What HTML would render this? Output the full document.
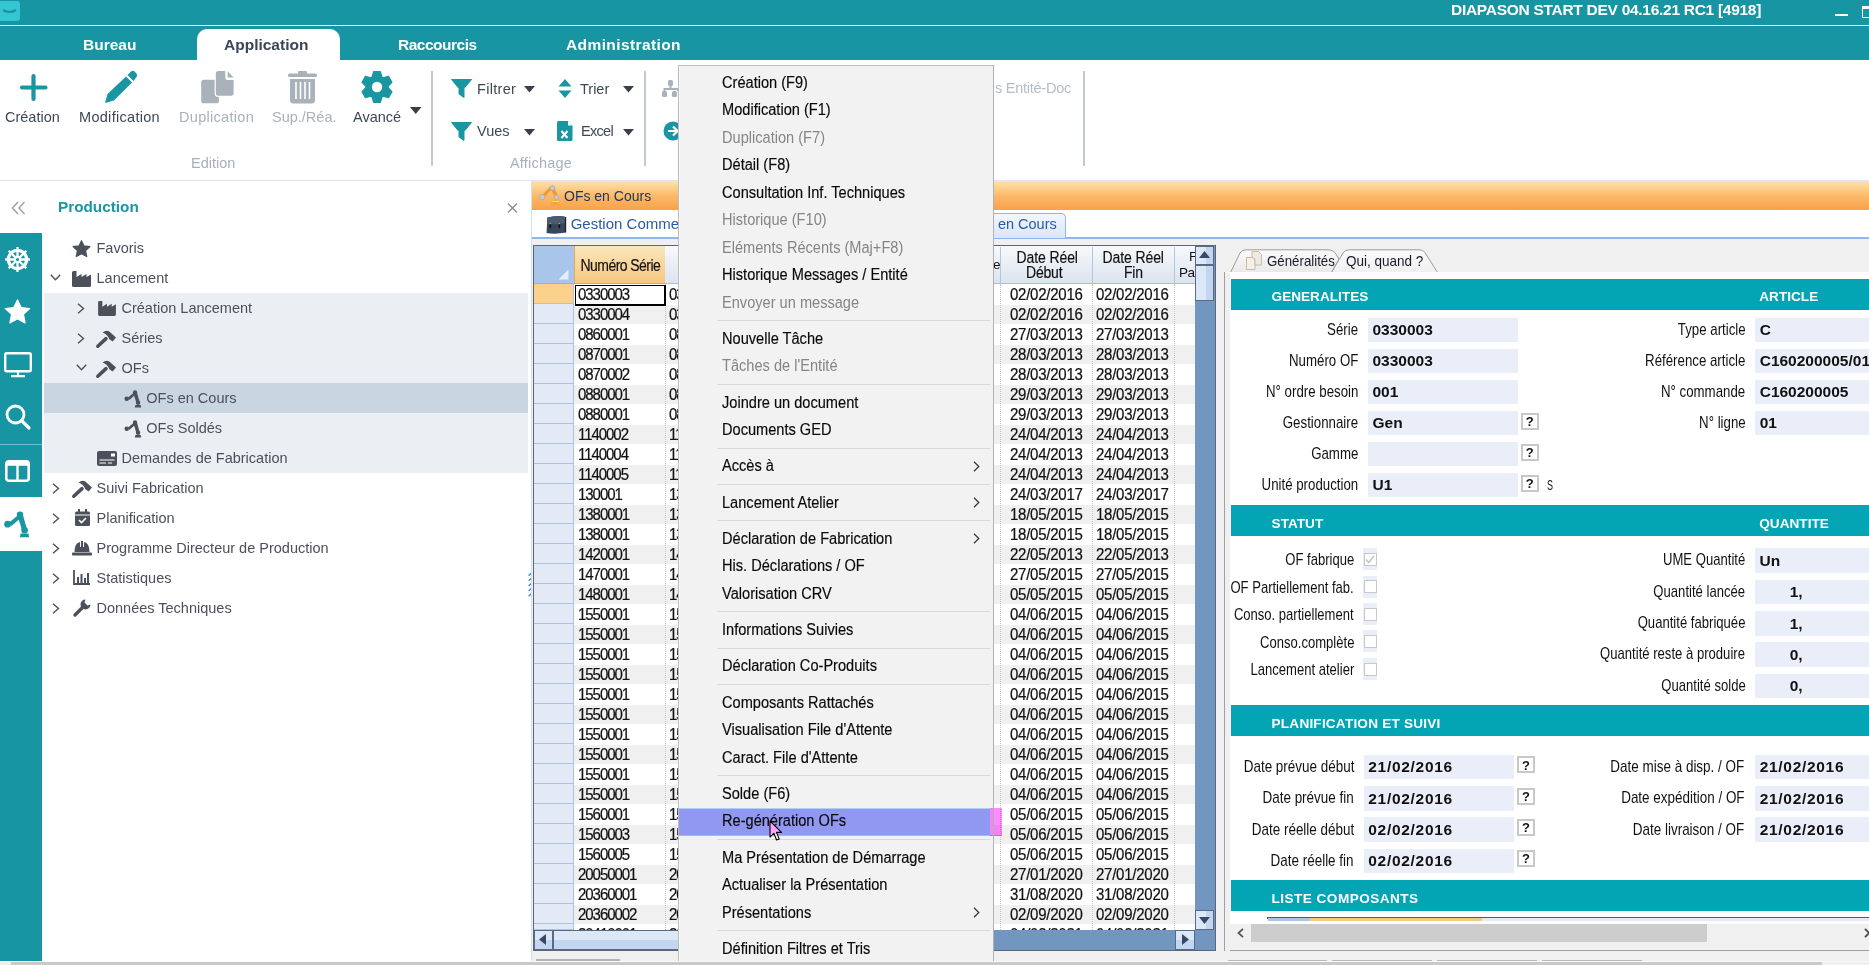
<!DOCTYPE html>
<html><head><meta charset="utf-8">
<style>
*{box-sizing:border-box}
html,body{margin:0;padding:0}
body{width:1869px;height:965px;position:relative;overflow:hidden;background:#fff;font-family:"Liberation Sans",sans-serif;color:#000}
.a{position:absolute}
.t{position:absolute;white-space:nowrap;line-height:1}
svg{position:absolute;overflow:visible}
/* ribbon */
.rl{font-size:14.5px;color:#3f4756}
.rd{color:#a9b1ba}
.tab{font-size:15.5px;font-weight:bold;color:#fff}
/* tree */
.tr{font-size:14.5px;color:#4b505b}
/* menu */
.mi{position:absolute;left:722px;font-size:14.6px;color:#0a0a0a;-webkit-text-stroke:0.15px #0a0a0a;transform:scaleY(1.08);transform-origin:0 12.36px;white-space:nowrap;line-height:1}
.mi.d{color:#858585;-webkit-text-stroke:0}
.ms{position:absolute;left:717px;width:273px;height:1px;background:#d9d9d9}
.sub{position:absolute;left:973px;width:7px;height:7px;border-right:1.3px solid #333;border-top:1.3px solid #333;transform:rotate(45deg)}
/* grid */
.g{font-size:14px;letter-spacing:-0.45px;color:#111;white-space:nowrap;line-height:1;position:absolute}
.gh{font-size:14px;transform:scaleY(1.12);transform-origin:0 11.85px;-webkit-text-stroke:0.15px #111}
.gd{font-size:15px;transform:scaleY(1.14);transform-origin:0 12.7px;-webkit-text-stroke:0.2px #111}
/* detail */
.lb{position:absolute;font-size:13.6px;color:#111;white-space:nowrap;line-height:1;text-align:right}
.fi{position:absolute;background:#e9eef9;height:25px}
.fv{position:absolute;font-size:14px;font-weight:bold;color:#111;white-space:nowrap;line-height:1}
.q{position:absolute;width:17px;height:17px;border:1px solid #a8a8a8;background:#fff;font-size:12px;font-weight:bold;text-align:center;line-height:15px;color:#111}
.bar{position:absolute;left:1231px;width:638px;height:31px;background:#04a4b3}
.bt{position:absolute;font-size:14px;font-weight:bold;color:#fff;white-space:nowrap;line-height:1}
.cb{position:absolute;left:1363px;width:13px;height:13px;border:1px solid #c9c9c9;background:#fff}
.cbb{position:absolute;left:1362px;width:15px;height:22px;background:#e9eef9}
</style></head>
<body>
<!-- ============ TITLE BAR ============ -->
<div class="a" style="left:0;top:0;width:1869px;height:60px;background:#1895a2"></div>
<div class="a" style="left:0;top:24.5px;width:1869px;height:1.5px;background:#eef7f8"></div>
<div class="a" style="left:0;top:1px;width:20px;height:20px;background:#35c6d4;border-radius:0 3px 3px 0"></div>
<svg style="left:0;top:0" width="20" height="20"><path d="M3 10 Q9.5 14 16 10" stroke="#1895a2" stroke-width="2.2" fill="none"/></svg>
<div class="t" style="left:1451px;top:1.7px;font-size:15.5px;letter-spacing:-0.28px;font-weight:bold;color:#fff">DIAPASON START DEV 04.16.21 RC1 [4918]</div>
<div class="a" style="left:1835px;top:14px;width:13px;height:2px;background:#fff"></div>
<div class="a" style="left:1862px;top:6px;width:12px;height:12px;border:1px solid #fff;border-top-width:3px"></div>

<!-- tabs -->
<div class="a" style="left:197px;top:29px;width:143px;height:32px;background:#fff;border-radius:10px 10px 0 0"></div>
<div class="t tab" style="left:83px;top:37px">Bureau</div>
<div class="t tab" style="left:224px;top:37px;color:#3b4657">Application</div>
<div class="t tab" style="left:398px;top:37px;letter-spacing:-0.5px">Raccourcis</div>
<div class="t tab" style="left:566px;top:37px;letter-spacing:0.4px">Administration</div>

<!-- ============ RIBBON ============ -->
<div class="a" style="left:0;top:180px;width:1869px;height:1px;background:#dfe6ed"></div>
<!-- Création plus -->
<svg style="left:20px;top:74px" width="28" height="27"><path d="M13.5 2V25M2 13.5H25.5" stroke="#1a96a3" stroke-width="4.2" stroke-linecap="round"/></svg>
<div class="t rl" style="left:5px;top:110px">Création</div>
<!-- pencil -->
<svg style="left:104px;top:70px" width="34" height="34" viewBox="0 0 34 34"><path d="M1 33 L3.5 24 L22 6.5 L28 12.5 L10 30.5 Z" fill="#1a96a3"/><path d="M23.5 5 L27 1.5 Q29 0 31 2 L32.5 3.5 Q34 5.5 32.5 7 L29.5 11 Z" fill="#1a96a3"/></svg>
<div class="t rl" style="left:79px;top:110px;letter-spacing:0.3px">Modification</div>
<!-- duplication -->
<svg style="left:200px;top:70px" width="36" height="36" viewBox="0 0 36 36"><rect x="1.2" y="9.7" width="17.7" height="23.6" rx="2.6" fill="#a9b1bb"/><path d="M15.8 3.6 Q15.8 1.1 18.3 1.1 H25.3 V7.5 Q25.3 10 27.8 10 H33.6 V23.3 Q33.6 25.8 31.1 25.8 H18.3 Q15.8 25.8 15.8 23.3 Z" fill="#a9b1bb" stroke="#fff" stroke-width="2.4" paint-order="stroke"/><path d="M27.6 1.3 L33.6 7.4 H27.6 Z" fill="#a9b1bb"/></svg>
<div class="t rl rd" style="left:179px;top:110px;letter-spacing:0.3px">Duplication</div>
<!-- trash -->
<svg style="left:288px;top:71px" width="30" height="33" viewBox="0 0 30 33"><rect x="0" y="2.5" width="29" height="3.5" rx="1.5" fill="#a9b1bb"/><rect x="10" y="0" width="9" height="3" rx="1" fill="#a9b1bb"/><path d="M2 8 H27 V29 Q27 32.5 23.5 32.5 H5.5 Q2 32.5 2 29 Z" fill="#a9b1bb"/><path d="M8 11V28M12.5 11V28M17 11V28M21.5 11V28" stroke="#fff" stroke-width="1.6"/></svg>
<div class="t rl rd" style="left:272px;top:110px">Sup./Réa.</div>
<!-- gear -->
<svg style="left:361px;top:71px" width="32" height="32" viewBox="-16 -16 32 32"><g fill="#1a96a3" stroke="#1a96a3" stroke-width="1.2" stroke-linejoin="round"><circle r="11"/><path id="th" d="M-3.4 -15.3H3.4L5.2 -9H-5.2Z"/><use href="#th" transform="rotate(60)"/><use href="#th" transform="rotate(120)"/><use href="#th" transform="rotate(180)"/><use href="#th" transform="rotate(240)"/><use href="#th" transform="rotate(300)"/></g><circle r="5.2" fill="#fff"/></svg>
<div class="t rl" style="left:353px;top:110px">Avancé</div>
<svg style="left:410px;top:107px" width="12" height="8"><path d="M0 0H11.5L5.75 7Z" fill="#3a3f4a"/></svg>
<div class="a" style="left:431px;top:71px;width:1.5px;height:95px;background:#c4c9ce"></div>
<div class="t rl rd" style="left:191px;top:156px;color:#a8b0bb">Edition</div>

<!-- Affichage group -->
<svg style="left:451px;top:79px" width="21" height="19" viewBox="0 0 21 19"><path d="M0.5 0.5H20.5L13 9.5V18.5L8 15V9.5Z" fill="#1a96a3" stroke="#1a96a3" stroke-linejoin="round"/></svg>
<div class="t rl" style="left:477px;top:82px;letter-spacing:0.3px">Filtrer</div>
<svg style="left:524px;top:86px" width="12" height="7"><path d="M0 0H11L5.5 6.5Z" fill="#3a3f4a"/></svg>
<svg style="left:558px;top:79px" width="14" height="19" viewBox="0 0 14 19"><path d="M7 0L13.5 7.5H0.5Z M7 19L13.5 11.5H0.5Z" fill="#1a96a3"/></svg>
<div class="t rl" style="left:580px;top:82px">Trier</div>
<svg style="left:623px;top:86px" width="12" height="7"><path d="M0 0H11L5.5 6.5Z" fill="#3a3f4a"/></svg>

<svg style="left:451px;top:122px" width="21" height="19" viewBox="0 0 21 19"><path d="M0.5 0.5H20.5L13 9.5V18.5L8 15V9.5Z" fill="#1a96a3" stroke="#1a96a3" stroke-linejoin="round"/></svg>
<div class="t rl" style="left:477px;top:124px">Vues</div>
<svg style="left:524px;top:129px" width="12" height="7"><path d="M0 0H11L5.5 6.5Z" fill="#3a3f4a"/></svg>
<svg style="left:557px;top:121px" width="16" height="20" viewBox="0 0 16 20"><path d="M1.5 0H11L15.5 4.5V18.5Q15.5 20 14 20H1.5Q0 20 0 18.5V1.5Q0 0 1.5 0Z" fill="#1a96a3"/><path d="M11 0V4.5H15.5Z" fill="#fff"/><path d="M4.5 10L10.5 17M10.5 10L4.5 17" stroke="#fff" stroke-width="2"/></svg>
<div class="t rl" style="left:581px;top:124px;letter-spacing:-0.7px">Excel</div>
<svg style="left:623px;top:129px" width="12" height="7"><path d="M0 0H11L5.5 6.5Z" fill="#3a3f4a"/></svg>
<div class="a" style="left:644px;top:71px;width:1.5px;height:95px;background:#c4c9ce"></div>
<div class="t rl" style="left:510px;top:156px;color:#a8b0bb;letter-spacing:0.2px">Affichage</div>
<!-- org chart icon (partially hidden by menu) -->
<svg style="left:662px;top:80px" width="20" height="18" viewBox="0 0 20 18"><rect x="6" y="0" width="5" height="6" rx="1.5" fill="#a9b1bb"/><rect x="0" y="11" width="5" height="6" rx="1.5" fill="#a9b1bb"/><rect x="10" y="11" width="5" height="6" rx="1.5" fill="#a9b1bb"/><path d="M8.5 5V9M2.5 11V9H16V11" stroke="#a9b1bb" stroke-width="2" fill="none"/></svg>
<svg style="left:663px;top:121px" width="20" height="20" viewBox="0 0 20 20"><circle cx="10" cy="10" r="9.5" fill="#1a96a3"/><path d="M5 10H14M10 5.5L14.5 10L10 14.5" stroke="#fff" stroke-width="2.2" fill="none"/></svg>
<div class="t rl rd" style="left:995px;top:81px;color:#b5bcc6;letter-spacing:-0.25px">s Entité-Doc</div>
<div class="a" style="left:1083px;top:71px;width:1.5px;height:95px;background:#c4c9ce"></div>


<!-- ============ SIDEBAR ============ -->
<svg style="left:11px;top:201px" width="15" height="14" viewBox="0 0 15 14"><path d="M7 1L1.5 7L7 13M13.5 1L8 7L13.5 13" stroke="#99a2ac" stroke-width="1.5" fill="none"/></svg>
<div class="t" style="left:58px;top:199.3px;font-size:15.3px;font-weight:bold;color:#1a96a6">Production</div>
<svg style="left:507px;top:203px" width="11" height="10" viewBox="0 0 11 10"><path d="M1 0.5L10 9.5M10 0.5L1 9.5" stroke="#8a9099" stroke-width="1.4"/></svg>
<div class="a" style="left:0;top:233px;width:42px;height:728px;background:#1895a2"></div>
<div class="a" style="left:0;top:444px;width:42px;height:1.2px;background:#6cc0c8"></div>
<div class="a" style="left:0;top:497px;width:42px;height:54px;background:#fff"></div>
<!-- wheel icon -->
<svg style="left:5px;top:247px" width="25" height="25" viewBox="-12.5 -12.5 25 25"><g stroke="#fff" fill="none"><circle r="9.1" stroke-width="3.2"/><path d="M0 -12.4V12.4M-12.4 0H12.4M-8.8 -8.8L8.8 8.8M8.8 -8.8L-8.8 8.8" stroke-width="2.3"/></g><circle r="3.8" fill="#fff"/><circle r="1.6" fill="#1895a2"/></svg>
<!-- star -->
<svg style="left:4px;top:299px" width="27" height="26" viewBox="0 0 24 23"><path d="M12 0.8L15.2 7.6L22.8 8.5L17.2 13.6L18.7 21.2L12 17.4L5.3 21.2L6.8 13.6L1.2 8.5L8.8 7.6Z" fill="#fff" stroke="#fff" stroke-width="1.2" stroke-linejoin="round"/></svg>
<!-- monitor -->
<svg style="left:4px;top:352px" width="28" height="26" viewBox="0 0 28 26"><rect x="1.2" y="1.2" width="25.6" height="18" rx="1.5" stroke="#fff" stroke-width="2.4" fill="none"/><path d="M14 20V24M7 24.2H21" stroke="#fff" stroke-width="2.2"/></svg>
<!-- search -->
<svg style="left:5px;top:404px" width="26" height="26" viewBox="0 0 26 26"><circle cx="10.5" cy="10.5" r="8.5" stroke="#fff" stroke-width="2.8" fill="none"/><path d="M16.5 16.5L24 24" stroke="#fff" stroke-width="3.2" stroke-linecap="round"/></svg>
<!-- layout -->
<svg style="left:5px;top:460px" width="25" height="22" viewBox="0 0 25 22"><rect x="1.3" y="1.3" width="22.4" height="19.4" rx="2.5" stroke="#fff" stroke-width="2.6" fill="none"/><rect x="1.3" y="1.3" width="22.4" height="4.5" fill="#fff"/><path d="M12.5 5V20.7" stroke="#fff" stroke-width="2.4"/></svg>
<!-- robot arm teal -->
<svg style="left:4px;top:511px" width="26" height="27" viewBox="0 0 26 27"><g fill="#1a96a3"><circle cx="3.6" cy="13.2" r="3.4"/><path d="M5.5 11.2L15.5 3L17.2 6.5L7.5 15Z"/><circle cx="16" cy="3.6" r="3.2"/><path d="M13.5 4.5L18.6 2.8L23 18.5L18.2 19.8Z"/><circle cx="20.6" cy="19.2" r="3.3"/><path d="M16.5 22.5H24.5L25.2 26.2H15.8Z"/></g></svg>

<!-- tree highlight -->
<div class="a" style="left:44px;top:293px;width:484px;height:180px;background:#ebeff3"></div>
<div class="a" style="left:44px;top:383px;width:484px;height:30px;background:#c9d5e0"></div>

<!-- tree rows: baseline 253.5 + 30k -->
<svg style="left:72px;top:240px" width="19" height="18" viewBox="0 0 24 23"><path d="M12 0.8L15.2 7.6L22.8 8.5L17.2 13.6L18.7 21.2L12 17.4L5.3 21.2L6.8 13.6L1.2 8.5L8.8 7.6Z" fill="#4b505b" stroke="#4b505b" stroke-width="1.5" stroke-linejoin="round"/></svg>
<div class="t tr" style="left:96.5px;top:241.2px">Favoris</div>

<svg style="left:50px;top:274px" width="11" height="7" viewBox="0 0 11 7"><path d="M0.8 0.8L5.5 5.8L10.2 0.8" stroke="#4b505b" stroke-width="1.4" fill="none"/></svg>
<svg style="left:72px;top:271px" width="19" height="16" viewBox="0 0 19 16"><path d="M0 1.5Q0 0 1.5 0H4.5V6L9.5 3V6L14.5 3V6L19 3.5V14.5Q19 16 17.5 16H1.5Q0 16 0 14.5Z" fill="#4b505b"/></svg>
<div class="t tr" style="left:96.5px;top:271.2px">Lancement</div>

<svg style="left:77px;top:303px" width="8" height="11" viewBox="0 0 8 11"><path d="M1 0.8L6.5 5.5L1 10.2" stroke="#4b505b" stroke-width="1.4" fill="none"/></svg>
<svg style="left:98px;top:301px" width="18" height="15" viewBox="0 0 19 16"><path d="M0 1.5Q0 0 1.5 0H4.5V6L9.5 3V6L14.5 3V6L19 3.5V14.5Q19 16 17.5 16H1.5Q0 16 0 14.5Z" fill="#4b505b"/></svg>
<div class="t tr" style="left:121.5px;top:301.2px">Création Lancement</div>

<svg style="left:77px;top:333px" width="8" height="11" viewBox="0 0 8 11"><path d="M1 0.8L6.5 5.5L1 10.2" stroke="#4b505b" stroke-width="1.4" fill="none"/></svg>
<svg style="left:96px;top:330px" width="20" height="18" viewBox="0 0 20 18"><path d="M1.8 16.2L10 8.6" stroke="#4b505b" stroke-width="3.5" stroke-linecap="round"/><path d="M6.6 2.6Q9.5 0 13 1.2L20 7.6L16.6 11.6L13.4 9.2Q11.2 4.2 6.6 2.6Z" fill="#4b505b"/></svg>
<div class="t tr" style="left:121.5px;top:331.2px">Séries</div>

<svg style="left:76px;top:364px" width="11" height="7" viewBox="0 0 11 7"><path d="M0.8 0.8L5.5 5.8L10.2 0.8" stroke="#4b505b" stroke-width="1.4" fill="none"/></svg>
<svg style="left:96px;top:360px" width="20" height="18" viewBox="0 0 20 18"><path d="M1.8 16.2L10 8.6" stroke="#4b505b" stroke-width="3.5" stroke-linecap="round"/><path d="M6.6 2.6Q9.5 0 13 1.2L20 7.6L16.6 11.6L13.4 9.2Q11.2 4.2 6.6 2.6Z" fill="#4b505b"/></svg>
<div class="t tr" style="left:121.5px;top:361.2px">OFs</div>

<svg style="left:124px;top:390px" width="18" height="18" viewBox="0 0 26 27"><g fill="#4b505b"><circle cx="3.6" cy="13.2" r="3.4"/><path d="M5.5 11.2L15.5 3L17.2 6.5L7.5 15Z"/><circle cx="16" cy="3.6" r="3.2"/><path d="M13.5 4.5L18.6 2.8L23 18.5L18.2 19.8Z"/><circle cx="20.6" cy="19.2" r="3.3"/><path d="M16.5 22.5H24.5L25.2 26.2H15.8Z"/></g></svg>
<div class="t tr" style="left:146.3px;top:391.2px">OFs en Cours</div>

<svg style="left:124px;top:420px" width="18" height="18" viewBox="0 0 26 27"><g fill="#4b505b"><circle cx="3.6" cy="13.2" r="3.4"/><path d="M5.5 11.2L15.5 3L17.2 6.5L7.5 15Z"/><circle cx="16" cy="3.6" r="3.2"/><path d="M13.5 4.5L18.6 2.8L23 18.5L18.2 19.8Z"/><circle cx="20.6" cy="19.2" r="3.3"/><path d="M16.5 22.5H24.5L25.2 26.2H15.8Z"/></g></svg>
<div class="t tr" style="left:146.3px;top:421.2px">OFs Soldés</div>

<svg style="left:97px;top:451px" width="20" height="15" viewBox="0 0 20 15"><rect x="0" y="0" width="20" height="15" rx="2" fill="#4b505b"/><rect x="14" y="2.5" width="4" height="3" fill="#fff"/><path d="M2.5 9H17.5M2.5 12H9M11 12H15" stroke="#fff" stroke-width="1.2"/></svg>
<div class="t tr" style="left:121.5px;top:451.2px">Demandes de Fabrication</div>

<svg style="left:52px;top:483px" width="8" height="11" viewBox="0 0 8 11"><path d="M1 0.8L6.5 5.5L1 10.2" stroke="#4b505b" stroke-width="1.4" fill="none"/></svg>
<svg style="left:72px;top:480px" width="20" height="18" viewBox="0 0 20 18"><path d="M1.8 16.2L10 8.6" stroke="#4b505b" stroke-width="3.5" stroke-linecap="round"/><path d="M6.6 2.6Q9.5 0 13 1.2L20 7.6L16.6 11.6L13.4 9.2Q11.2 4.2 6.6 2.6Z" fill="#4b505b"/></svg>
<div class="t tr" style="left:96.5px;top:481.2px">Suivi Fabrication</div>

<svg style="left:52px;top:513px" width="8" height="11" viewBox="0 0 8 11"><path d="M1 0.8L6.5 5.5L1 10.2" stroke="#4b505b" stroke-width="1.4" fill="none"/></svg>
<svg style="left:75px;top:509px" width="15" height="17" viewBox="0 0 15 17"><rect x="0" y="2.5" width="15" height="14.5" rx="1.5" fill="#4b505b"/><rect x="3" y="0" width="2" height="4" fill="#4b505b"/><rect x="10" y="0" width="2" height="4" fill="#4b505b"/><path d="M0 6H15" stroke="#fff" stroke-width="1"/><path d="M4 11L6.5 13.5L11 9" stroke="#fff" stroke-width="1.6" fill="none"/></svg>
<div class="t tr" style="left:96.5px;top:511.2px">Planification</div>

<svg style="left:52px;top:543px" width="8" height="11" viewBox="0 0 8 11"><path d="M1 0.8L6.5 5.5L1 10.2" stroke="#4b505b" stroke-width="1.4" fill="none"/></svg>
<svg style="left:72px;top:540px" width="20" height="16" viewBox="0 0 20 16"><path d="M2.5 12Q2.5 3 8 2V7H9V1H11V7H12V2Q17.5 3 17.5 12Z" fill="#4b505b"/><rect x="0" y="12.5" width="20" height="3" rx="1" fill="#4b505b"/></svg>
<div class="t tr" style="left:96.5px;top:541.2px">Programme Directeur de Production</div>

<svg style="left:52px;top:573px" width="8" height="11" viewBox="0 0 8 11"><path d="M1 0.8L6.5 5.5L1 10.2" stroke="#4b505b" stroke-width="1.4" fill="none"/></svg>
<svg style="left:73px;top:570px" width="17" height="15" viewBox="0 0 17 15"><path d="M1 0V14H17" stroke="#4b505b" stroke-width="1.8" fill="none"/><rect x="4" y="7" width="2" height="6" fill="#4b505b"/><rect x="7.5" y="4" width="2" height="9" fill="#4b505b"/><rect x="11" y="8" width="2" height="5" fill="#4b505b"/><rect x="14" y="3" width="2" height="10" fill="#4b505b"/></svg>
<div class="t tr" style="left:96.5px;top:571.2px">Statistiques</div>

<svg style="left:52px;top:603px" width="8" height="11" viewBox="0 0 8 11"><path d="M1 0.8L6.5 5.5L1 10.2" stroke="#4b505b" stroke-width="1.4" fill="none"/></svg>
<svg style="left:73px;top:599px" width="18" height="18" viewBox="0 0 18 18"><path d="M2 16L9 9" stroke="#4b505b" stroke-width="3.4" stroke-linecap="round"/><path d="M12.5 0.5A5 5 0 1 0 17.5 5.5L14.5 6.5L11.5 3.5Z" fill="#4b505b"/></svg>
<div class="t tr" style="left:96.5px;top:601.2px">Données Techniques</div>
<svg style="left:528px;top:572px" width="4" height="25" viewBox="0 0 4 25"><g stroke="#3b82e0" stroke-width="1.3" stroke-linecap="round"><path d="M1 3.3L3 1.5M1 8.4L3 6.6M1 13.5L3 11.7M1 18.6L3 16.8M1 23.7L3 21.9"/></g></svg>

<!-- ============ GRID AREA ============ -->
<div class="a" style="left:531px;top:181px;width:1px;height:780px;background:#cfe0f5"></div>
<div class="a" style="left:532px;top:181px;width:1337px;height:29px;background:linear-gradient(#fde3ab,#fbb766 55%,#f9a14b)"></div>
<svg style="left:539px;top:185px" width="22" height="22" viewBox="0 0 22 22"><path d="M3.5 12L12.5 2.5" stroke="#f49a28" stroke-width="3.2"/><path d="M13.5 3.5L17.5 12" stroke="#f49a28" stroke-width="3.6"/><path d="M13 15.5H20L21.5 20.5H11.5Z" fill="#f7a832"/><path d="M13 16.5H20" stroke="#fde2b0" stroke-width="1"/><circle cx="3.3" cy="12.2" r="2.6" fill="#c8ccd2" stroke="#9aa0a8" stroke-width="0.6"/><circle cx="13.4" cy="3" r="2.4" fill="#c8ccd2" stroke="#9aa0a8" stroke-width="0.6"/><circle cx="17.4" cy="12.2" r="2.3" fill="#c8ccd2" stroke="#9aa0a8" stroke-width="0.6"/></svg>
<div class="t" style="left:564px;top:189px;font-size:14px;color:#1e3657;transform:scaleY(1.07);transform-origin:0 12px">OFs en Cours</div>
<div class="a" style="left:532px;top:210px;width:1337px;height:28px;background:#fff"></div>
<div class="a" style="left:532px;top:237px;width:1337px;height:1.5px;background:#8fb6ee"></div>
<div class="a" style="left:900px;top:213px;width:166px;height:25px;background:linear-gradient(#f3f7fd,#d9e6f7);border:1px solid #8fb6ee;border-bottom:none;border-radius:0 5px 0 0"></div>
<div class="t" style="left:966.5px;top:217px;font-size:14.5px;color:#2a5aa8;transform:scaleY(1.06);transform-origin:0 12px">OFs en Cours</div>
<svg style="left:546px;top:215px" width="20" height="20" viewBox="0 0 20 20"><path d="M1.5 2.5Q10 0 18.5 1.5L19.5 17.5Q10 19.5 0.5 18Z" fill="#37465a"/><path d="M1.5 2.5Q10 0 18.5 1.5L19 8Q10 9.5 1 8.5Z" fill="#4b5b70"/><rect x="3.5" y="8" width="1.6" height="5" fill="#111"/><rect x="12.5" y="8" width="1.6" height="5" fill="#111"/><rect x="3.5" y="8" width="1.6" height="1.2" fill="#c9a440"/><rect x="12.5" y="8" width="1.6" height="1.2" fill="#c9a440"/><path d="M19.5 2V17.5" stroke="#1c2430" stroke-width="1.4"/></svg>
<div class="t" style="left:570.7px;top:215.9px;font-size:15px;color:#2a5aa8">Gestion Commerciale</div>
<div class="a" style="left:532px;top:238.5px;width:690px;height:723px;background:#f0f0f0"></div>
<div class="a" style="left:533px;top:245px;width:683px;height:706px;background:#fff;border:1.5px solid #5f6673"></div>
<div class="a" style="left:534px;top:246px;width:661px;height:38px;background:linear-gradient(#f7f9fc,#dbe4ef);border-bottom:1px solid #a9c0dc"></div>
<div class="a" style="left:534px;top:246px;width:40px;height:38px;background:#a9c5ea;border-bottom:1px solid #e9a050"></div>
<svg style="left:558px;top:269px" width="11" height="11"><path d="M10.5 0.5V10.5H0.5Z" fill="#e6eef9"/></svg>
<div class="a" style="left:574px;top:246px;width:91px;height:38px;background:linear-gradient(#fbe6bd,#f5c77f);border-left:1px solid #f0a850;border-bottom:1px solid #e9a050"></div>
<div class="g gh" style="left:580.5px;top:259px;letter-spacing:-0.55px">Numéro Série</div>
<div class="a" style="left:1000px;top:247px;width:1px;height:37px;background:#b3c6de"></div>
<div class="a" style="left:1092px;top:247px;width:1px;height:37px;background:#b3c6de"></div>
<div class="a" style="left:1174px;top:247px;width:1px;height:37px;background:#b3c6de"></div>
<div class="g" style="left:993px;top:258px;font-size:13.5px">e</div>
<div class="g gh" style="left:1016.5px;top:251px;letter-spacing:-0.1px">Date Réel</div>
<div class="g gh" style="left:1026px;top:266px;letter-spacing:-0.2px">Début</div>
<div class="g gh" style="left:1102.5px;top:251px;letter-spacing:-0.1px">Date Réel</div>
<div class="g gh" style="left:1124px;top:266px;letter-spacing:-0.2px">Fin</div>
<div class="a" style="left:1175px;top:246px;width:20px;height:38px;overflow:hidden"><div class="g" style="left:14px;top:4px;font-size:13.5px">F</div><div class="g" style="left:4px;top:20px;font-size:13.5px">Pa</div></div>
<div class="a" style="left:534px;top:284px;width:40px;height:20px;background:#fcd18c;border-bottom:1px solid #a9c3e0;border-right:1px solid #a9c3e0"></div>
<div class="a" style="left:574px;top:284px;width:104px;height:20px;overflow:hidden"><div class="g gd" style="left:4px;top:3px;letter-spacing:-1.05px">0330003</div><div class="g gd" style="left:95px;top:3px;letter-spacing:-1.05px">0330003</div></div>
<div class="a" style="left:993px;top:284px;width:202px;height:20px;overflow:hidden"><div class="g gd" style="left:17px;top:3px;letter-spacing:-0.25px">02/02/2016</div><div class="g gd" style="left:103px;top:3px;letter-spacing:-0.25px">02/02/2016</div></div>
<div class="a" style="left:574px;top:305px;width:621px;height:18.5px;background:#f0f0f0"></div>
<div class="a" style="left:534px;top:304px;width:40px;height:20px;background:#e3eaf6;border-bottom:1px solid #a9c3e0;border-right:1px solid #a9c3e0"></div>
<div class="a" style="left:574px;top:304px;width:104px;height:20px;overflow:hidden"><div class="g gd" style="left:4px;top:3px;letter-spacing:-1.05px">0330004</div><div class="g gd" style="left:95px;top:3px;letter-spacing:-1.05px">0330004</div></div>
<div class="a" style="left:993px;top:304px;width:202px;height:20px;overflow:hidden"><div class="g gd" style="left:17px;top:3px;letter-spacing:-0.25px">02/02/2016</div><div class="g gd" style="left:103px;top:3px;letter-spacing:-0.25px">02/02/2016</div></div>
<div class="a" style="left:534px;top:324px;width:40px;height:20px;background:#e3eaf6;border-bottom:1px solid #a9c3e0;border-right:1px solid #a9c3e0"></div>
<div class="a" style="left:574px;top:324px;width:104px;height:20px;overflow:hidden"><div class="g gd" style="left:4px;top:3px;letter-spacing:-1.05px">0860001</div><div class="g gd" style="left:95px;top:3px;letter-spacing:-1.05px">0860001</div></div>
<div class="a" style="left:993px;top:324px;width:202px;height:20px;overflow:hidden"><div class="g gd" style="left:17px;top:3px;letter-spacing:-0.25px">27/03/2013</div><div class="g gd" style="left:103px;top:3px;letter-spacing:-0.25px">27/03/2013</div></div>
<div class="a" style="left:574px;top:345px;width:621px;height:18.5px;background:#f0f0f0"></div>
<div class="a" style="left:534px;top:344px;width:40px;height:20px;background:#e3eaf6;border-bottom:1px solid #a9c3e0;border-right:1px solid #a9c3e0"></div>
<div class="a" style="left:574px;top:344px;width:104px;height:20px;overflow:hidden"><div class="g gd" style="left:4px;top:3px;letter-spacing:-1.05px">0870001</div><div class="g gd" style="left:95px;top:3px;letter-spacing:-1.05px">0870001</div></div>
<div class="a" style="left:993px;top:344px;width:202px;height:20px;overflow:hidden"><div class="g gd" style="left:17px;top:3px;letter-spacing:-0.25px">28/03/2013</div><div class="g gd" style="left:103px;top:3px;letter-spacing:-0.25px">28/03/2013</div></div>
<div class="a" style="left:534px;top:364px;width:40px;height:20px;background:#e3eaf6;border-bottom:1px solid #a9c3e0;border-right:1px solid #a9c3e0"></div>
<div class="a" style="left:574px;top:364px;width:104px;height:20px;overflow:hidden"><div class="g gd" style="left:4px;top:3px;letter-spacing:-1.05px">0870002</div><div class="g gd" style="left:95px;top:3px;letter-spacing:-1.05px">0870002</div></div>
<div class="a" style="left:993px;top:364px;width:202px;height:20px;overflow:hidden"><div class="g gd" style="left:17px;top:3px;letter-spacing:-0.25px">28/03/2013</div><div class="g gd" style="left:103px;top:3px;letter-spacing:-0.25px">28/03/2013</div></div>
<div class="a" style="left:574px;top:385px;width:621px;height:18.5px;background:#f0f0f0"></div>
<div class="a" style="left:534px;top:384px;width:40px;height:20px;background:#e3eaf6;border-bottom:1px solid #a9c3e0;border-right:1px solid #a9c3e0"></div>
<div class="a" style="left:574px;top:384px;width:104px;height:20px;overflow:hidden"><div class="g gd" style="left:4px;top:3px;letter-spacing:-1.05px">0880001</div><div class="g gd" style="left:95px;top:3px;letter-spacing:-1.05px">0880001</div></div>
<div class="a" style="left:993px;top:384px;width:202px;height:20px;overflow:hidden"><div class="g gd" style="left:17px;top:3px;letter-spacing:-0.25px">29/03/2013</div><div class="g gd" style="left:103px;top:3px;letter-spacing:-0.25px">29/03/2013</div></div>
<div class="a" style="left:534px;top:404px;width:40px;height:20px;background:#e3eaf6;border-bottom:1px solid #a9c3e0;border-right:1px solid #a9c3e0"></div>
<div class="a" style="left:574px;top:404px;width:104px;height:20px;overflow:hidden"><div class="g gd" style="left:4px;top:3px;letter-spacing:-1.05px">0880001</div><div class="g gd" style="left:95px;top:3px;letter-spacing:-1.05px">0880001</div></div>
<div class="a" style="left:993px;top:404px;width:202px;height:20px;overflow:hidden"><div class="g gd" style="left:17px;top:3px;letter-spacing:-0.25px">29/03/2013</div><div class="g gd" style="left:103px;top:3px;letter-spacing:-0.25px">29/03/2013</div></div>
<div class="a" style="left:574px;top:425px;width:621px;height:18.5px;background:#f0f0f0"></div>
<div class="a" style="left:534px;top:424px;width:40px;height:20px;background:#e3eaf6;border-bottom:1px solid #a9c3e0;border-right:1px solid #a9c3e0"></div>
<div class="a" style="left:574px;top:424px;width:104px;height:20px;overflow:hidden"><div class="g gd" style="left:4px;top:3px;letter-spacing:-1.05px">1140002</div><div class="g gd" style="left:95px;top:3px;letter-spacing:-1.05px">1140002</div></div>
<div class="a" style="left:993px;top:424px;width:202px;height:20px;overflow:hidden"><div class="g gd" style="left:17px;top:3px;letter-spacing:-0.25px">24/04/2013</div><div class="g gd" style="left:103px;top:3px;letter-spacing:-0.25px">24/04/2013</div></div>
<div class="a" style="left:534px;top:444px;width:40px;height:20px;background:#e3eaf6;border-bottom:1px solid #a9c3e0;border-right:1px solid #a9c3e0"></div>
<div class="a" style="left:574px;top:444px;width:104px;height:20px;overflow:hidden"><div class="g gd" style="left:4px;top:3px;letter-spacing:-1.05px">1140004</div><div class="g gd" style="left:95px;top:3px;letter-spacing:-1.05px">1140004</div></div>
<div class="a" style="left:993px;top:444px;width:202px;height:20px;overflow:hidden"><div class="g gd" style="left:17px;top:3px;letter-spacing:-0.25px">24/04/2013</div><div class="g gd" style="left:103px;top:3px;letter-spacing:-0.25px">24/04/2013</div></div>
<div class="a" style="left:574px;top:465px;width:621px;height:18.5px;background:#f0f0f0"></div>
<div class="a" style="left:534px;top:464px;width:40px;height:20px;background:#e3eaf6;border-bottom:1px solid #a9c3e0;border-right:1px solid #a9c3e0"></div>
<div class="a" style="left:574px;top:464px;width:104px;height:20px;overflow:hidden"><div class="g gd" style="left:4px;top:3px;letter-spacing:-1.05px">1140005</div><div class="g gd" style="left:95px;top:3px;letter-spacing:-1.05px">1140005</div></div>
<div class="a" style="left:993px;top:464px;width:202px;height:20px;overflow:hidden"><div class="g gd" style="left:17px;top:3px;letter-spacing:-0.25px">24/04/2013</div><div class="g gd" style="left:103px;top:3px;letter-spacing:-0.25px">24/04/2013</div></div>
<div class="a" style="left:534px;top:484px;width:40px;height:20px;background:#e3eaf6;border-bottom:1px solid #a9c3e0;border-right:1px solid #a9c3e0"></div>
<div class="a" style="left:574px;top:484px;width:104px;height:20px;overflow:hidden"><div class="g gd" style="left:4px;top:3px;letter-spacing:-1.05px">130001</div><div class="g gd" style="left:95px;top:3px;letter-spacing:-1.05px">130001</div></div>
<div class="a" style="left:993px;top:484px;width:202px;height:20px;overflow:hidden"><div class="g gd" style="left:17px;top:3px;letter-spacing:-0.25px">24/03/2017</div><div class="g gd" style="left:103px;top:3px;letter-spacing:-0.25px">24/03/2017</div></div>
<div class="a" style="left:574px;top:505px;width:621px;height:18.5px;background:#f0f0f0"></div>
<div class="a" style="left:534px;top:504px;width:40px;height:20px;background:#e3eaf6;border-bottom:1px solid #a9c3e0;border-right:1px solid #a9c3e0"></div>
<div class="a" style="left:574px;top:504px;width:104px;height:20px;overflow:hidden"><div class="g gd" style="left:4px;top:3px;letter-spacing:-1.05px">1380001</div><div class="g gd" style="left:95px;top:3px;letter-spacing:-1.05px">1380001</div></div>
<div class="a" style="left:993px;top:504px;width:202px;height:20px;overflow:hidden"><div class="g gd" style="left:17px;top:3px;letter-spacing:-0.25px">18/05/2015</div><div class="g gd" style="left:103px;top:3px;letter-spacing:-0.25px">18/05/2015</div></div>
<div class="a" style="left:534px;top:524px;width:40px;height:20px;background:#e3eaf6;border-bottom:1px solid #a9c3e0;border-right:1px solid #a9c3e0"></div>
<div class="a" style="left:574px;top:524px;width:104px;height:20px;overflow:hidden"><div class="g gd" style="left:4px;top:3px;letter-spacing:-1.05px">1380001</div><div class="g gd" style="left:95px;top:3px;letter-spacing:-1.05px">1380001</div></div>
<div class="a" style="left:993px;top:524px;width:202px;height:20px;overflow:hidden"><div class="g gd" style="left:17px;top:3px;letter-spacing:-0.25px">18/05/2015</div><div class="g gd" style="left:103px;top:3px;letter-spacing:-0.25px">18/05/2015</div></div>
<div class="a" style="left:574px;top:545px;width:621px;height:18.5px;background:#f0f0f0"></div>
<div class="a" style="left:534px;top:544px;width:40px;height:20px;background:#e3eaf6;border-bottom:1px solid #a9c3e0;border-right:1px solid #a9c3e0"></div>
<div class="a" style="left:574px;top:544px;width:104px;height:20px;overflow:hidden"><div class="g gd" style="left:4px;top:3px;letter-spacing:-1.05px">1420001</div><div class="g gd" style="left:95px;top:3px;letter-spacing:-1.05px">1420001</div></div>
<div class="a" style="left:993px;top:544px;width:202px;height:20px;overflow:hidden"><div class="g gd" style="left:17px;top:3px;letter-spacing:-0.25px">22/05/2013</div><div class="g gd" style="left:103px;top:3px;letter-spacing:-0.25px">22/05/2013</div></div>
<div class="a" style="left:534px;top:564px;width:40px;height:20px;background:#e3eaf6;border-bottom:1px solid #a9c3e0;border-right:1px solid #a9c3e0"></div>
<div class="a" style="left:574px;top:564px;width:104px;height:20px;overflow:hidden"><div class="g gd" style="left:4px;top:3px;letter-spacing:-1.05px">1470001</div><div class="g gd" style="left:95px;top:3px;letter-spacing:-1.05px">1470001</div></div>
<div class="a" style="left:993px;top:564px;width:202px;height:20px;overflow:hidden"><div class="g gd" style="left:17px;top:3px;letter-spacing:-0.25px">27/05/2015</div><div class="g gd" style="left:103px;top:3px;letter-spacing:-0.25px">27/05/2015</div></div>
<div class="a" style="left:574px;top:585px;width:621px;height:18.5px;background:#f0f0f0"></div>
<div class="a" style="left:534px;top:584px;width:40px;height:20px;background:#e3eaf6;border-bottom:1px solid #a9c3e0;border-right:1px solid #a9c3e0"></div>
<div class="a" style="left:574px;top:584px;width:104px;height:20px;overflow:hidden"><div class="g gd" style="left:4px;top:3px;letter-spacing:-1.05px">1480001</div><div class="g gd" style="left:95px;top:3px;letter-spacing:-1.05px">1480001</div></div>
<div class="a" style="left:993px;top:584px;width:202px;height:20px;overflow:hidden"><div class="g gd" style="left:17px;top:3px;letter-spacing:-0.25px">05/05/2015</div><div class="g gd" style="left:103px;top:3px;letter-spacing:-0.25px">05/05/2015</div></div>
<div class="a" style="left:534px;top:604px;width:40px;height:20px;background:#e3eaf6;border-bottom:1px solid #a9c3e0;border-right:1px solid #a9c3e0"></div>
<div class="a" style="left:574px;top:604px;width:104px;height:20px;overflow:hidden"><div class="g gd" style="left:4px;top:3px;letter-spacing:-1.05px">1550001</div><div class="g gd" style="left:95px;top:3px;letter-spacing:-1.05px">1550001</div></div>
<div class="a" style="left:993px;top:604px;width:202px;height:20px;overflow:hidden"><div class="g gd" style="left:17px;top:3px;letter-spacing:-0.25px">04/06/2015</div><div class="g gd" style="left:103px;top:3px;letter-spacing:-0.25px">04/06/2015</div></div>
<div class="a" style="left:574px;top:625px;width:621px;height:18.5px;background:#f0f0f0"></div>
<div class="a" style="left:534px;top:624px;width:40px;height:20px;background:#e3eaf6;border-bottom:1px solid #a9c3e0;border-right:1px solid #a9c3e0"></div>
<div class="a" style="left:574px;top:624px;width:104px;height:20px;overflow:hidden"><div class="g gd" style="left:4px;top:3px;letter-spacing:-1.05px">1550001</div><div class="g gd" style="left:95px;top:3px;letter-spacing:-1.05px">1550001</div></div>
<div class="a" style="left:993px;top:624px;width:202px;height:20px;overflow:hidden"><div class="g gd" style="left:17px;top:3px;letter-spacing:-0.25px">04/06/2015</div><div class="g gd" style="left:103px;top:3px;letter-spacing:-0.25px">04/06/2015</div></div>
<div class="a" style="left:534px;top:644px;width:40px;height:20px;background:#e3eaf6;border-bottom:1px solid #a9c3e0;border-right:1px solid #a9c3e0"></div>
<div class="a" style="left:574px;top:644px;width:104px;height:20px;overflow:hidden"><div class="g gd" style="left:4px;top:3px;letter-spacing:-1.05px">1550001</div><div class="g gd" style="left:95px;top:3px;letter-spacing:-1.05px">1550001</div></div>
<div class="a" style="left:993px;top:644px;width:202px;height:20px;overflow:hidden"><div class="g gd" style="left:17px;top:3px;letter-spacing:-0.25px">04/06/2015</div><div class="g gd" style="left:103px;top:3px;letter-spacing:-0.25px">04/06/2015</div></div>
<div class="a" style="left:574px;top:665px;width:621px;height:18.5px;background:#f0f0f0"></div>
<div class="a" style="left:534px;top:664px;width:40px;height:20px;background:#e3eaf6;border-bottom:1px solid #a9c3e0;border-right:1px solid #a9c3e0"></div>
<div class="a" style="left:574px;top:664px;width:104px;height:20px;overflow:hidden"><div class="g gd" style="left:4px;top:3px;letter-spacing:-1.05px">1550001</div><div class="g gd" style="left:95px;top:3px;letter-spacing:-1.05px">1550001</div></div>
<div class="a" style="left:993px;top:664px;width:202px;height:20px;overflow:hidden"><div class="g gd" style="left:17px;top:3px;letter-spacing:-0.25px">04/06/2015</div><div class="g gd" style="left:103px;top:3px;letter-spacing:-0.25px">04/06/2015</div></div>
<div class="a" style="left:534px;top:684px;width:40px;height:20px;background:#e3eaf6;border-bottom:1px solid #a9c3e0;border-right:1px solid #a9c3e0"></div>
<div class="a" style="left:574px;top:684px;width:104px;height:20px;overflow:hidden"><div class="g gd" style="left:4px;top:3px;letter-spacing:-1.05px">1550001</div><div class="g gd" style="left:95px;top:3px;letter-spacing:-1.05px">1550001</div></div>
<div class="a" style="left:993px;top:684px;width:202px;height:20px;overflow:hidden"><div class="g gd" style="left:17px;top:3px;letter-spacing:-0.25px">04/06/2015</div><div class="g gd" style="left:103px;top:3px;letter-spacing:-0.25px">04/06/2015</div></div>
<div class="a" style="left:574px;top:705px;width:621px;height:18.5px;background:#f0f0f0"></div>
<div class="a" style="left:534px;top:704px;width:40px;height:20px;background:#e3eaf6;border-bottom:1px solid #a9c3e0;border-right:1px solid #a9c3e0"></div>
<div class="a" style="left:574px;top:704px;width:104px;height:20px;overflow:hidden"><div class="g gd" style="left:4px;top:3px;letter-spacing:-1.05px">1550001</div><div class="g gd" style="left:95px;top:3px;letter-spacing:-1.05px">1550001</div></div>
<div class="a" style="left:993px;top:704px;width:202px;height:20px;overflow:hidden"><div class="g gd" style="left:17px;top:3px;letter-spacing:-0.25px">04/06/2015</div><div class="g gd" style="left:103px;top:3px;letter-spacing:-0.25px">04/06/2015</div></div>
<div class="a" style="left:534px;top:724px;width:40px;height:20px;background:#e3eaf6;border-bottom:1px solid #a9c3e0;border-right:1px solid #a9c3e0"></div>
<div class="a" style="left:574px;top:724px;width:104px;height:20px;overflow:hidden"><div class="g gd" style="left:4px;top:3px;letter-spacing:-1.05px">1550001</div><div class="g gd" style="left:95px;top:3px;letter-spacing:-1.05px">1550001</div></div>
<div class="a" style="left:993px;top:724px;width:202px;height:20px;overflow:hidden"><div class="g gd" style="left:17px;top:3px;letter-spacing:-0.25px">04/06/2015</div><div class="g gd" style="left:103px;top:3px;letter-spacing:-0.25px">04/06/2015</div></div>
<div class="a" style="left:574px;top:745px;width:621px;height:18.5px;background:#f0f0f0"></div>
<div class="a" style="left:534px;top:744px;width:40px;height:20px;background:#e3eaf6;border-bottom:1px solid #a9c3e0;border-right:1px solid #a9c3e0"></div>
<div class="a" style="left:574px;top:744px;width:104px;height:20px;overflow:hidden"><div class="g gd" style="left:4px;top:3px;letter-spacing:-1.05px">1550001</div><div class="g gd" style="left:95px;top:3px;letter-spacing:-1.05px">1550001</div></div>
<div class="a" style="left:993px;top:744px;width:202px;height:20px;overflow:hidden"><div class="g gd" style="left:17px;top:3px;letter-spacing:-0.25px">04/06/2015</div><div class="g gd" style="left:103px;top:3px;letter-spacing:-0.25px">04/06/2015</div></div>
<div class="a" style="left:534px;top:764px;width:40px;height:20px;background:#e3eaf6;border-bottom:1px solid #a9c3e0;border-right:1px solid #a9c3e0"></div>
<div class="a" style="left:574px;top:764px;width:104px;height:20px;overflow:hidden"><div class="g gd" style="left:4px;top:3px;letter-spacing:-1.05px">1550001</div><div class="g gd" style="left:95px;top:3px;letter-spacing:-1.05px">1550001</div></div>
<div class="a" style="left:993px;top:764px;width:202px;height:20px;overflow:hidden"><div class="g gd" style="left:17px;top:3px;letter-spacing:-0.25px">04/06/2015</div><div class="g gd" style="left:103px;top:3px;letter-spacing:-0.25px">04/06/2015</div></div>
<div class="a" style="left:574px;top:785px;width:621px;height:18.5px;background:#f0f0f0"></div>
<div class="a" style="left:534px;top:784px;width:40px;height:20px;background:#e3eaf6;border-bottom:1px solid #a9c3e0;border-right:1px solid #a9c3e0"></div>
<div class="a" style="left:574px;top:784px;width:104px;height:20px;overflow:hidden"><div class="g gd" style="left:4px;top:3px;letter-spacing:-1.05px">1550001</div><div class="g gd" style="left:95px;top:3px;letter-spacing:-1.05px">1550001</div></div>
<div class="a" style="left:993px;top:784px;width:202px;height:20px;overflow:hidden"><div class="g gd" style="left:17px;top:3px;letter-spacing:-0.25px">04/06/2015</div><div class="g gd" style="left:103px;top:3px;letter-spacing:-0.25px">04/06/2015</div></div>
<div class="a" style="left:534px;top:804px;width:40px;height:20px;background:#e3eaf6;border-bottom:1px solid #a9c3e0;border-right:1px solid #a9c3e0"></div>
<div class="a" style="left:574px;top:804px;width:104px;height:20px;overflow:hidden"><div class="g gd" style="left:4px;top:3px;letter-spacing:-1.05px">1560001</div><div class="g gd" style="left:95px;top:3px;letter-spacing:-1.05px">1560001</div></div>
<div class="a" style="left:993px;top:804px;width:202px;height:20px;overflow:hidden"><div class="g gd" style="left:17px;top:3px;letter-spacing:-0.25px">05/06/2015</div><div class="g gd" style="left:103px;top:3px;letter-spacing:-0.25px">05/06/2015</div></div>
<div class="a" style="left:574px;top:825px;width:621px;height:18.5px;background:#f0f0f0"></div>
<div class="a" style="left:534px;top:824px;width:40px;height:20px;background:#e3eaf6;border-bottom:1px solid #a9c3e0;border-right:1px solid #a9c3e0"></div>
<div class="a" style="left:574px;top:824px;width:104px;height:20px;overflow:hidden"><div class="g gd" style="left:4px;top:3px;letter-spacing:-1.05px">1560003</div><div class="g gd" style="left:95px;top:3px;letter-spacing:-1.05px">1560003</div></div>
<div class="a" style="left:993px;top:824px;width:202px;height:20px;overflow:hidden"><div class="g gd" style="left:17px;top:3px;letter-spacing:-0.25px">05/06/2015</div><div class="g gd" style="left:103px;top:3px;letter-spacing:-0.25px">05/06/2015</div></div>
<div class="a" style="left:534px;top:844px;width:40px;height:20px;background:#e3eaf6;border-bottom:1px solid #a9c3e0;border-right:1px solid #a9c3e0"></div>
<div class="a" style="left:574px;top:844px;width:104px;height:20px;overflow:hidden"><div class="g gd" style="left:4px;top:3px;letter-spacing:-1.05px">1560005</div><div class="g gd" style="left:95px;top:3px;letter-spacing:-1.05px">1560005</div></div>
<div class="a" style="left:993px;top:844px;width:202px;height:20px;overflow:hidden"><div class="g gd" style="left:17px;top:3px;letter-spacing:-0.25px">05/06/2015</div><div class="g gd" style="left:103px;top:3px;letter-spacing:-0.25px">05/06/2015</div></div>
<div class="a" style="left:574px;top:865px;width:621px;height:18.5px;background:#f0f0f0"></div>
<div class="a" style="left:534px;top:864px;width:40px;height:20px;background:#e3eaf6;border-bottom:1px solid #a9c3e0;border-right:1px solid #a9c3e0"></div>
<div class="a" style="left:574px;top:864px;width:104px;height:20px;overflow:hidden"><div class="g gd" style="left:4px;top:3px;letter-spacing:-1.05px">20050001</div><div class="g gd" style="left:95px;top:3px;letter-spacing:-1.05px">20050001</div></div>
<div class="a" style="left:993px;top:864px;width:202px;height:20px;overflow:hidden"><div class="g gd" style="left:17px;top:3px;letter-spacing:-0.25px">27/01/2020</div><div class="g gd" style="left:103px;top:3px;letter-spacing:-0.25px">27/01/2020</div></div>
<div class="a" style="left:534px;top:884px;width:40px;height:20px;background:#e3eaf6;border-bottom:1px solid #a9c3e0;border-right:1px solid #a9c3e0"></div>
<div class="a" style="left:574px;top:884px;width:104px;height:20px;overflow:hidden"><div class="g gd" style="left:4px;top:3px;letter-spacing:-1.05px">20360001</div><div class="g gd" style="left:95px;top:3px;letter-spacing:-1.05px">20360001</div></div>
<div class="a" style="left:993px;top:884px;width:202px;height:20px;overflow:hidden"><div class="g gd" style="left:17px;top:3px;letter-spacing:-0.25px">31/08/2020</div><div class="g gd" style="left:103px;top:3px;letter-spacing:-0.25px">31/08/2020</div></div>
<div class="a" style="left:574px;top:905px;width:621px;height:18.5px;background:#f0f0f0"></div>
<div class="a" style="left:534px;top:904px;width:40px;height:20px;background:#e3eaf6;border-bottom:1px solid #a9c3e0;border-right:1px solid #a9c3e0"></div>
<div class="a" style="left:574px;top:904px;width:104px;height:20px;overflow:hidden"><div class="g gd" style="left:4px;top:3px;letter-spacing:-1.05px">20360002</div><div class="g gd" style="left:95px;top:3px;letter-spacing:-1.05px">20360002</div></div>
<div class="a" style="left:993px;top:904px;width:202px;height:20px;overflow:hidden"><div class="g gd" style="left:17px;top:3px;letter-spacing:-0.25px">02/09/2020</div><div class="g gd" style="left:103px;top:3px;letter-spacing:-0.25px">02/09/2020</div></div>
<div class="a" style="left:534px;top:924px;width:40px;height:6px;background:#e3eaf6;border-bottom:1px solid #a9c3e0;border-right:1px solid #a9c3e0"></div>
<div class="a" style="left:574px;top:924px;width:104px;height:6px;overflow:hidden"><div class="g gd" style="left:4px;top:3px;letter-spacing:-1.05px">20410001</div><div class="g gd" style="left:95px;top:3px;letter-spacing:-1.05px">20410001</div></div>
<div class="a" style="left:993px;top:924px;width:202px;height:6px;overflow:hidden"><div class="g gd" style="left:17px;top:3px;letter-spacing:-0.25px">04/03/2021</div><div class="g gd" style="left:103px;top:3px;letter-spacing:-0.25px">04/03/2021</div></div>
<div class="a" style="left:665px;top:284px;width:1px;height:646px;border-left:1px dotted #c4c4c4"></div>
<div class="a" style="left:1000px;top:284px;width:1px;height:646px;border-left:1px dotted #c4c4c4"></div>
<div class="a" style="left:1092px;top:284px;width:1px;height:646px;border-left:1px dotted #c4c4c4"></div>
<div class="a" style="left:1174px;top:284px;width:1px;height:646px;border-left:1px dotted #c4c4c4"></div>
<div class="a" style="left:575px;top:285px;width:91px;height:21px;border:1.6px solid #000;border-bottom-width:2.5px;border-right-width:2px"></div>
<div class="a" style="left:1195px;top:246px;width:20px;height:704px;background:#7196c0"></div>
<div class="a" style="left:1195px;top:246px;width:19px;height:19px;background:linear-gradient(90deg,#dce8f8 60%,#c3d6f0 60%);border:1px solid #5a6a85"></div>
<svg style="left:1199px;top:251px" width="12" height="8"><path d="M0 7H11L5.5 0Z" fill="#3a4766"/></svg>
<div class="a" style="left:1195px;top:265px;width:19px;height:36px;background:linear-gradient(90deg,#dce8f8 60%,#c3d6f0 60%);border:1px solid #5a6a85"></div>
<div class="a" style="left:1195px;top:910px;width:19px;height:20px;background:linear-gradient(90deg,#dce8f8 60%,#c3d6f0 60%);border:1px solid #5a6a85"></div>
<svg style="left:1199px;top:917px" width="12" height="8"><path d="M0 0H11L5.5 7Z" fill="#3a4766"/></svg>
<div class="a" style="left:534px;top:930px;width:661px;height:20px;background:#7196c0"></div>
<div class="a" style="left:534px;top:930px;width:19px;height:20px;background:linear-gradient(#dce8f8 50%,#c3d6f0 50%);border:1px solid #5a6a85"></div>
<svg style="left:539px;top:934px" width="8" height="12"><path d="M7 0V11L0 5.5Z" fill="#3a4766"/></svg>
<div class="a" style="left:553px;top:930px;width:300px;height:20px;background:linear-gradient(#dce8f8 50%,#c3d6f0 50%);border:1px solid #5a6a85"></div>
<div class="a" style="left:1175px;top:930px;width:20px;height:20px;background:linear-gradient(#dce8f8 50%,#c3d6f0 50%);border:1px solid #5a6a85"></div>
<svg style="left:1182px;top:934px" width="8" height="12"><path d="M0 0V11L7 5.5Z" fill="#3a4766"/></svg>
<div class="a" style="left:536px;top:959px;width:84px;height:1.5px;background:#b4b4b4"></div>
<!-- ============ DETAIL PANEL ============ -->
<div class="a" style="left:1222px;top:238.5px;width:647px;height:723px;background:#f0f0f0"></div>
<svg style="left:1222px;top:246px" width="647" height="30" viewBox="0 0 647 30"><path d="M8.5 26.5 L18 7 Q20 3.8 24 3.8 L106 3.8 Q112 3.8 114.5 9 L117 13 L109.5 26.5 Z" fill="url(#tg)" stroke="#9c9c9c" stroke-width="1"/><path d="M109.5 26.5 L121 7 Q123 3.8 127 3.8 L197 3.8 Q202 3.8 204.5 9 L215.5 26.5 Z" fill="url(#tg2)" stroke="#9c9c9c" stroke-width="1"/><path d="M215.5 26.5 H647 M2.5 26.5 H8.5 M2.5 26.5 V30" stroke="#9c9c9c" stroke-width="1" fill="none"/><defs><linearGradient id="tg" x1="0" y1="0" x2="0" y2="1"><stop offset="0" stop-color="#fafafa"/><stop offset="1" stop-color="#e9e9e9"/></linearGradient><linearGradient id="tg2" x1="0" y1="0" x2="0" y2="1"><stop offset="0" stop-color="#fbfbfb"/><stop offset="1" stop-color="#f0f0f0"/></linearGradient></defs></svg>
<svg style="left:1246px;top:251px" width="16" height="19" viewBox="0 0 16 19"><path d="M0.5 6.5H7L9 8.5V18.5H0.5Z" fill="#f5efe6" stroke="#b8b0a4" stroke-width="0.8"/><path d="M6 0.5H12.5L15.5 3.5V14H9V8L6 6Z" fill="#f0e9de" stroke="#b8b0a4" stroke-width="0.8"/></svg>
<div class="t" style="left:1267.4px;top:252.5px;font-size:15px;color:#1a1a2a;transform:scaleX(0.885);transform-origin:left">Généralités</div>
<div class="t" style="left:1346px;top:252.5px;font-size:15px;color:#1a1a2a;transform:scaleX(0.9);transform-origin:left">Qui, quand ?</div>
<div class="a" style="left:1224px;top:272px;width:645px;height:679px;border-left:1px solid #a0a0a0;border-bottom:1px solid #a0a0a0;background:#fff"></div>
<div class="a" style="left:1225px;top:272.5px;width:5px;height:678px;background:#f0f0f0"></div>
<div class="a" style="left:1225px;top:941px;width:644px;height:9px;background:#f0f0f0"></div>
<div class="a" style="left:1231px;top:278.5px;width:638px;height:31px;background:#03a4b3"></div>
<div class="t" style="left:1271.6px;top:290.0px;font-size:13.6px;font-weight:bold;color:#fff;letter-spacing:0px">GENERALITES</div>
<div class="t" style="left:1759.3px;top:290.0px;font-size:13.6px;font-weight:bold;color:#fff">ARTICLE</div>
<div class="t" style="right:511px;top:321.7px;font-size:15px;color:#111;transform:scale(0.885,1.08);transform-origin:100% 12.7px">Série</div>
<div class="a" style="left:1367.5px;top:317.6px;width:150px;height:24.5px;background:#e9eef9"></div>
<div class="t" style="left:1372.5px;top:322.1px;font-size:15.5px;font-weight:bold;color:#111;letter-spacing:0px">0330003</div>
<div class="t" style="right:511px;top:352.7px;font-size:15px;color:#111;transform:scale(0.885,1.08);transform-origin:100% 12.7px">Numéro OF</div>
<div class="a" style="left:1367.5px;top:348.6px;width:150px;height:24.5px;background:#e9eef9"></div>
<div class="t" style="left:1372.5px;top:353.1px;font-size:15.5px;font-weight:bold;color:#111;letter-spacing:0px">0330003</div>
<div class="t" style="right:511px;top:383.8px;font-size:15px;color:#111;transform:scale(0.885,1.08);transform-origin:100% 12.7px">N° ordre besoin</div>
<div class="a" style="left:1367.5px;top:379.7px;width:150px;height:24.5px;background:#e9eef9"></div>
<div class="t" style="left:1372.5px;top:384.2px;font-size:15.5px;font-weight:bold;color:#111;letter-spacing:0px">001</div>
<div class="t" style="right:511px;top:414.8px;font-size:15px;color:#111;transform:scale(0.885,1.08);transform-origin:100% 12.7px">Gestionnaire</div>
<div class="a" style="left:1367.5px;top:410.7px;width:150px;height:24.5px;background:#e9eef9"></div>
<div class="t" style="left:1372.5px;top:415.2px;font-size:15.5px;font-weight:bold;color:#111;letter-spacing:0px">Gen</div>
<div class="a" style="left:1521.3px;top:412.5px;width:17.5px;height:17px;border:2.2px solid #c8c8c8;background:#fff"></div>
<div class="t" style="left:1525.8px;top:415.0px;font-size:13px;font-weight:bold;color:#111">?</div>
<div class="t" style="right:511px;top:445.9px;font-size:15px;color:#111;transform:scale(0.885,1.08);transform-origin:100% 12.7px">Gamme</div>
<div class="a" style="left:1367.5px;top:441.8px;width:150px;height:24.5px;background:#e9eef9"></div>
<div class="a" style="left:1521.3px;top:443.6px;width:17.5px;height:17px;border:2.2px solid #c8c8c8;background:#fff"></div>
<div class="t" style="left:1525.8px;top:446.1px;font-size:13px;font-weight:bold;color:#111">?</div>
<div class="t" style="right:511px;top:476.9px;font-size:15px;color:#111;transform:scale(0.885,1.08);transform-origin:100% 12.7px">Unité production</div>
<div class="a" style="left:1367.5px;top:472.8px;width:150px;height:24.5px;background:#e9eef9"></div>
<div class="t" style="left:1372.5px;top:477.3px;font-size:15.5px;font-weight:bold;color:#111;letter-spacing:0px">U1</div>
<div class="a" style="left:1521.3px;top:474.6px;width:17.5px;height:17px;border:2.2px solid #c8c8c8;background:#fff"></div>
<div class="t" style="left:1525.8px;top:477.1px;font-size:13px;font-weight:bold;color:#111">?</div>
<div class="t" style="left:1547px;top:476.8px;font-size:15px;color:#111;transform:scaleX(0.6);transform-origin:left">S</div>
<div class="t" style="right:123.5px;top:321.7px;font-size:15px;color:#111;transform:scale(0.885,1.08);transform-origin:100% 12.7px">Type article</div>
<div class="a" style="left:1754.7px;top:317.6px;width:120px;height:24.5px;background:#e9eef9"></div>
<div class="t" style="left:1759.7px;top:322.1px;font-size:15.5px;font-weight:bold;color:#111;letter-spacing:0px">C</div>
<div class="t" style="right:123.5px;top:352.7px;font-size:15px;color:#111;transform:scale(0.885,1.08);transform-origin:100% 12.7px">Référence article</div>
<div class="a" style="left:1754.7px;top:348.6px;width:120px;height:24.5px;background:#e9eef9"></div>
<div class="t" style="left:1759.7px;top:353.1px;font-size:15.5px;font-weight:bold;color:#111;letter-spacing:0px">C160200005/01</div>
<div class="t" style="right:123.5px;top:383.8px;font-size:15px;color:#111;transform:scale(0.885,1.08);transform-origin:100% 12.7px">N° commande</div>
<div class="a" style="left:1754.7px;top:379.7px;width:120px;height:24.5px;background:#e9eef9"></div>
<div class="t" style="left:1759.7px;top:384.2px;font-size:15.5px;font-weight:bold;color:#111;letter-spacing:0px">C160200005</div>
<div class="t" style="right:123.5px;top:414.8px;font-size:15px;color:#111;transform:scale(0.885,1.08);transform-origin:100% 12.7px">N° ligne</div>
<div class="a" style="left:1754.7px;top:410.7px;width:120px;height:24.5px;background:#e9eef9"></div>
<div class="t" style="left:1759.7px;top:415.2px;font-size:15.5px;font-weight:bold;color:#111;letter-spacing:0px">01</div>
<div class="a" style="left:1231px;top:505px;width:638px;height:31px;background:#03a4b3"></div>
<div class="t" style="left:1271.6px;top:516.5px;font-size:13.6px;font-weight:bold;color:#fff;letter-spacing:0px">STATUT</div>
<div class="t" style="left:1759.3px;top:516.5px;font-size:13.6px;font-weight:bold;color:#fff">QUANTITE</div>
<div class="t" style="right:515px;top:552.3px;font-size:15px;color:#111;transform:scale(0.87,1.08);transform-origin:100% 12.7px">OF fabrique</div>
<div class="a" style="left:1363px;top:548.0px;width:14px;height:22px;background:#e9eef9"></div>
<div class="a" style="left:1363.5px;top:552.7px;width:13px;height:13px;border:1px solid #c8c8c8;background:#fff"></div>
<svg style="left:1365px;top:554.5px" width="10" height="9"><path d="M1 4.5L3.8 7.5L9 1" stroke="#c4c4c4" stroke-width="1.5" fill="none"/></svg>
<div class="t" style="right:515px;top:579.8px;font-size:15px;color:#111;transform:scale(0.87,1.08);transform-origin:100% 12.7px">OF Partiellement fab.</div>
<div class="a" style="left:1363px;top:575.5px;width:14px;height:22px;background:#e9eef9"></div>
<div class="a" style="left:1363.5px;top:580.2px;width:13px;height:13px;border:1px solid #c8c8c8;background:#fff"></div>
<div class="t" style="right:515px;top:607.2px;font-size:15px;color:#111;transform:scale(0.87,1.08);transform-origin:100% 12.7px">Conso. partiellement</div>
<div class="a" style="left:1363px;top:602.9px;width:14px;height:22px;background:#e9eef9"></div>
<div class="a" style="left:1363.5px;top:607.6px;width:13px;height:13px;border:1px solid #c8c8c8;background:#fff"></div>
<div class="t" style="right:515px;top:634.6px;font-size:15px;color:#111;transform:scale(0.87,1.08);transform-origin:100% 12.7px">Conso.complète</div>
<div class="a" style="left:1363px;top:630.4px;width:14px;height:22px;background:#e9eef9"></div>
<div class="a" style="left:1363.5px;top:635.1px;width:13px;height:13px;border:1px solid #c8c8c8;background:#fff"></div>
<div class="t" style="right:515px;top:662.1px;font-size:15px;color:#111;transform:scale(0.87,1.08);transform-origin:100% 12.7px">Lancement atelier</div>
<div class="a" style="left:1363px;top:657.8px;width:14px;height:22px;background:#e9eef9"></div>
<div class="a" style="left:1363.5px;top:662.5px;width:13px;height:13px;border:1px solid #c8c8c8;background:#fff"></div>
<div class="t" style="right:123.70000000000005px;top:552.3px;font-size:15px;color:#111;transform:scale(0.873,1.08);transform-origin:100% 12.7px">UME Quantité</div>
<div class="a" style="left:1754.8px;top:548.3px;width:120px;height:24.5px;background:#e9eef9"></div>
<div class="t" style="left:1759.6px;top:552.8px;font-size:15.5px;font-weight:bold;color:#111;letter-spacing:0px">Un</div>
<div class="t" style="right:123.70000000000005px;top:583.6px;font-size:15px;color:#111;transform:scale(0.873,1.08);transform-origin:100% 12.7px">Quantité lancée</div>
<div class="a" style="left:1754.8px;top:579.6px;width:120px;height:24.5px;background:#e9eef9"></div>
<div class="t" style="left:1789.7px;top:584.1px;font-size:15.5px;font-weight:bold;color:#111;letter-spacing:0px">1,</div>
<div class="t" style="right:123.70000000000005px;top:615.0px;font-size:15px;color:#111;transform:scale(0.873,1.08);transform-origin:100% 12.7px">Quantité fabriquée</div>
<div class="a" style="left:1754.8px;top:611.0px;width:120px;height:24.5px;background:#e9eef9"></div>
<div class="t" style="left:1789.7px;top:615.5px;font-size:15.5px;font-weight:bold;color:#111;letter-spacing:0px">1,</div>
<div class="t" style="right:123.70000000000005px;top:646.3px;font-size:15px;color:#111;transform:scale(0.873,1.08);transform-origin:100% 12.7px">Quantité reste à produire</div>
<div class="a" style="left:1754.8px;top:642.3px;width:120px;height:24.5px;background:#e9eef9"></div>
<div class="t" style="left:1789.7px;top:646.8px;font-size:15.5px;font-weight:bold;color:#111;letter-spacing:0px">0,</div>
<div class="t" style="right:123.70000000000005px;top:677.7px;font-size:15px;color:#111;transform:scale(0.873,1.08);transform-origin:100% 12.7px">Quantité solde</div>
<div class="a" style="left:1754.8px;top:673.7px;width:120px;height:24.5px;background:#e9eef9"></div>
<div class="t" style="left:1789.7px;top:678.2px;font-size:15.5px;font-weight:bold;color:#111;letter-spacing:0px">0,</div>
<div class="a" style="left:1231px;top:705px;width:638px;height:31px;background:#03a4b3"></div>
<div class="t" style="left:1271.6px;top:716.5px;font-size:13.6px;font-weight:bold;color:#fff;letter-spacing:0.2px">PLANIFICATION ET SUIVI</div>
<div class="t" style="right:515px;top:759.2px;font-size:15px;color:#111;transform:scale(0.897,1.08);transform-origin:100% 12.7px">Date prévue début</div>
<div class="a" style="left:1363.6px;top:754.9px;width:150px;height:24.5px;background:#e9eef9"></div>
<div class="t" style="left:1368.3px;top:759.4px;font-size:15.5px;font-weight:bold;color:#111;letter-spacing:0.7px">21/02/2016</div>
<div class="a" style="left:1517.4px;top:756.3px;width:17.5px;height:17px;border:2.2px solid #c8c8c8;background:#fff"></div>
<div class="t" style="left:1521.9px;top:758.8px;font-size:13px;font-weight:bold;color:#111">?</div>
<div class="t" style="right:515px;top:790.4px;font-size:15px;color:#111;transform:scale(0.897,1.08);transform-origin:100% 12.7px">Date prévue fin</div>
<div class="a" style="left:1363.6px;top:786.1px;width:150px;height:24.5px;background:#e9eef9"></div>
<div class="t" style="left:1368.3px;top:790.6px;font-size:15.5px;font-weight:bold;color:#111;letter-spacing:0.7px">21/02/2016</div>
<div class="a" style="left:1517.4px;top:787.5px;width:17.5px;height:17px;border:2.2px solid #c8c8c8;background:#fff"></div>
<div class="t" style="left:1521.9px;top:790.0px;font-size:13px;font-weight:bold;color:#111">?</div>
<div class="t" style="right:515px;top:821.6px;font-size:15px;color:#111;transform:scale(0.897,1.08);transform-origin:100% 12.7px">Date réelle début</div>
<div class="a" style="left:1363.6px;top:817.3px;width:150px;height:24.5px;background:#e9eef9"></div>
<div class="t" style="left:1368.3px;top:821.8px;font-size:15.5px;font-weight:bold;color:#111;letter-spacing:0.7px">02/02/2016</div>
<div class="a" style="left:1517.4px;top:818.7px;width:17.5px;height:17px;border:2.2px solid #c8c8c8;background:#fff"></div>
<div class="t" style="left:1521.9px;top:821.2px;font-size:13px;font-weight:bold;color:#111">?</div>
<div class="t" style="right:515px;top:852.8px;font-size:15px;color:#111;transform:scale(0.897,1.08);transform-origin:100% 12.7px">Date réelle fin</div>
<div class="a" style="left:1363.6px;top:848.5px;width:150px;height:24.5px;background:#e9eef9"></div>
<div class="t" style="left:1368.3px;top:853.0px;font-size:15.5px;font-weight:bold;color:#111;letter-spacing:0.7px">02/02/2016</div>
<div class="a" style="left:1517.4px;top:849.9px;width:17.5px;height:17px;border:2.2px solid #c8c8c8;background:#fff"></div>
<div class="t" style="left:1521.9px;top:852.4px;font-size:13px;font-weight:bold;color:#111">?</div>
<div class="t" style="right:124.40000000000009px;top:759.2px;font-size:15px;color:#111;transform:scale(0.897,1.08);transform-origin:100% 12.7px">Date mise à disp. / OF</div>
<div class="a" style="left:1755px;top:754.9px;width:120px;height:24.5px;background:#e9eef9"></div>
<div class="t" style="left:1759.7px;top:759.4px;font-size:15.5px;font-weight:bold;color:#111;letter-spacing:0.7px">21/02/2016</div>
<div class="t" style="right:124.40000000000009px;top:790.4px;font-size:15px;color:#111;transform:scale(0.897,1.08);transform-origin:100% 12.7px">Date expédition / OF</div>
<div class="a" style="left:1755px;top:786.1px;width:120px;height:24.5px;background:#e9eef9"></div>
<div class="t" style="left:1759.7px;top:790.6px;font-size:15.5px;font-weight:bold;color:#111;letter-spacing:0.7px">21/02/2016</div>
<div class="t" style="right:124.40000000000009px;top:821.6px;font-size:15px;color:#111;transform:scale(0.897,1.08);transform-origin:100% 12.7px">Date livraison / OF</div>
<div class="a" style="left:1755px;top:817.3px;width:120px;height:24.5px;background:#e9eef9"></div>
<div class="t" style="left:1759.7px;top:821.8px;font-size:15.5px;font-weight:bold;color:#111;letter-spacing:0.7px">21/02/2016</div>
<div class="a" style="left:1231px;top:880px;width:638px;height:31px;background:#03a4b3"></div>
<div class="t" style="left:1271.6px;top:891.5px;font-size:13.6px;font-weight:bold;color:#fff;letter-spacing:0.45px">LISTE COMPOSANTS</div>
<div class="a" style="left:1267px;top:916.5px;width:602px;height:2.5px;background:#5a5a5a"></div>
<div class="a" style="left:1268px;top:918px;width:42px;height:2.5px;background:#a9c5ea"></div>
<div class="a" style="left:1310px;top:918px;width:172px;height:2.5px;background:#f7c884"></div>
<div class="a" style="left:1482px;top:918px;width:387px;height:2.5px;background:#e6ecf4"></div>
<div class="a" style="left:1230px;top:924px;width:639px;height:17.5px;background:#f0f0f0"></div>
<svg style="left:1237px;top:928px" width="7" height="10"><path d="M6 0.8L1.5 5L6 9.2" stroke="#555" stroke-width="1.8" fill="none"/></svg>
<div class="a" style="left:1251px;top:924px;width:456px;height:17.5px;background:#cdcdcd"></div>
<svg style="left:1864px;top:928px" width="6" height="10"><path d="M1 0.8L5 5L1 9.2" stroke="#444" stroke-width="1.8" fill="none"/></svg>
<div class="a" style="left:1228px;top:959.5px;width:99px;height:1px;background:#b9b9b9"></div>
<div class="a" style="left:1332px;top:959.5px;width:100px;height:1px;background:#b9b9b9"></div>
<div class="a" style="left:1437px;top:959.5px;width:100px;height:1px;background:#b9b9b9"></div>
<div class="a" style="left:1542px;top:959.5px;width:100px;height:1px;background:#b9b9b9"></div>
<!-- ============ CONTEXT MENU ============ -->
<div class="a" style="left:678px;top:65px;width:316px;height:900px;background:#f2f2f2;border:1px solid #bdbdbd;border-bottom:none"></div>
<div class="a" style="left:679px;top:66px;width:1px;height:899px;background:#f8f8f8"></div>
<div class="mi" style="top:75.64px">Création (F9)</div>
<div class="mi" style="top:103.14px">Modification (F1)</div>
<div class="mi d" style="top:130.64px">Duplication (F7)</div>
<div class="mi" style="top:158.14px">Détail (F8)</div>
<div class="mi" style="top:185.64px">Consultation Inf. Techniques</div>
<div class="mi d" style="top:213.14px">Historique (F10)</div>
<div class="mi d" style="top:240.64px">Eléments Récents (Maj+F8)</div>
<div class="mi" style="top:268.14px">Historique Messages / Entité</div>
<div class="mi d" style="top:295.64px">Envoyer un message</div>
<div class="ms" style="top:320.23px"></div>
<div class="mi" style="top:331.89px">Nouvelle Tâche</div>
<div class="mi d" style="top:359.39px">Tâches de l'Entité</div>
<div class="ms" style="top:383.98px"></div>
<div class="mi" style="top:395.64px">Joindre un document</div>
<div class="mi" style="top:423.14px">Documents GED</div>
<div class="ms" style="top:447.73px"></div>
<div class="mi" style="top:459.39px">Accès à</div>
<svg style="left:973px;top:460.75px" width="7" height="11" viewBox="0 0 7 11"><path d="M1 0.8L5.8 5.5L1 10.2" stroke="#333" stroke-width="1.2" fill="none"/></svg>
<div class="ms" style="top:483.98px"></div>
<div class="mi" style="top:495.64px">Lancement Atelier</div>
<svg style="left:973px;top:497.00px" width="7" height="11" viewBox="0 0 7 11"><path d="M1 0.8L5.8 5.5L1 10.2" stroke="#333" stroke-width="1.2" fill="none"/></svg>
<div class="ms" style="top:520.23px"></div>
<div class="mi" style="top:531.89px">Déclaration de Fabrication</div>
<svg style="left:973px;top:533.25px" width="7" height="11" viewBox="0 0 7 11"><path d="M1 0.8L5.8 5.5L1 10.2" stroke="#333" stroke-width="1.2" fill="none"/></svg>
<div class="mi" style="top:559.39px">His. Déclarations / OF</div>
<div class="mi" style="top:586.89px">Valorisation CRV</div>
<div class="ms" style="top:611.48px"></div>
<div class="mi" style="top:623.14px">Informations Suivies</div>
<div class="ms" style="top:647.73px"></div>
<div class="mi" style="top:659.39px">Déclaration Co-Produits</div>
<div class="ms" style="top:683.98px"></div>
<div class="mi" style="top:695.64px">Composants Rattachés</div>
<div class="mi" style="top:723.14px">Visualisation File d'Attente</div>
<div class="mi" style="top:750.64px">Caract. File d'Attente</div>
<div class="ms" style="top:775.23px"></div>
<div class="mi" style="top:786.89px">Solde (F6)</div>
<div class="a" style="left:679px;top:807.65px;width:311px;height:27px;background:#9098f2;border-top:1px solid #a8d4f4"></div>
<div class="a" style="left:679px;top:834.65px;width:323px;height:1.2px;background:#f090f0"></div>
<div class="a" style="left:990px;top:807.65px;width:12px;height:28.2px;background:#ff80ff;mix-blend-mode:multiply;opacity:0.9"></div>
<div class="mi" style="top:814.39px">Re-génération OFs</div>
<div class="ms" style="top:838.98px"></div>
<div class="mi" style="top:850.64px">Ma Présentation de Démarrage</div>
<div class="mi" style="top:878.14px">Actualiser la Présentation</div>
<div class="mi" style="top:905.64px">Présentations</div>
<svg style="left:973px;top:907.00px" width="7" height="11" viewBox="0 0 7 11"><path d="M1 0.8L5.8 5.5L1 10.2" stroke="#333" stroke-width="1.2" fill="none"/></svg>
<div class="ms" style="top:930.23px"></div>
<div class="mi" style="top:941.89px">Définition Filtres et Tris</div>
<div class="a" style="left:993px;top:65px;width:1px;height:900px;background:#b0b0b0"></div>
<svg style="left:769.3px;top:820px" width="14" height="22" viewBox="0 0 14 22"><defs><linearGradient id="cg" x1="0" y1="0" x2="0" y2="22" gradientUnits="userSpaceOnUse"><stop offset="0.62" stop-color="#ffa4ff"/><stop offset="0.62" stop-color="#fff"/></linearGradient></defs><path d="M1 1V17L4.8 13.3L7.6 20L10.2 18.9L7.4 12.4H12.5Z" fill="url(#cg)" stroke="#000" stroke-width="1.1" stroke-linejoin="round"/></svg>
<div class="a" style="left:0;top:961px;width:1869px;height:4px;background:#efefef;border-top:1px solid #fafafa"></div>
<div class="a" style="left:11px;top:962px;width:1811px;height:3px;background:#c9c9c9"></div>
</body></html>
